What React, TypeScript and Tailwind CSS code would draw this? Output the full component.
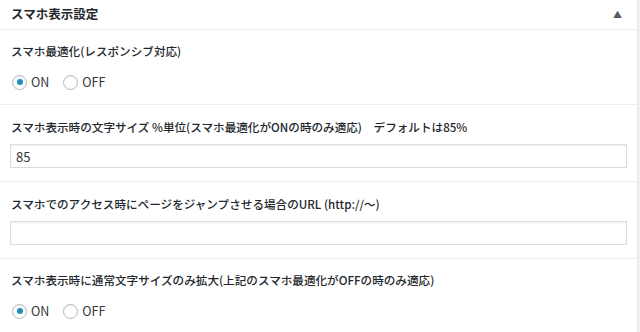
import React from 'react'

const font = { fontFamily: '"Noto Sans CJK JP", "Noto Sans", sans-serif' }

const Radio = ({ checked, label }: { checked?: boolean; label: string }) => (
  <label className="flex items-center gap-[4px] h-[16px]">
    <span className="w-[15px] h-[15px] rounded-full border border-[#b4b9be] bg-white shadow-[inset_0_1px_2px_rgba(0,0,0,0.07)] flex items-center justify-center">
      {checked && <span className="w-[6px] h-[6px] rounded-full bg-[#1e8cbe]" />}
    </span>
    <span className="text-[12.5px] text-[#32373c] leading-[16px]">{label}</span>
  </label>
)

const RadioRow = ({ label }: { label: string }) => (
  <div className="px-[11px] pt-[13px] pb-[14px] border-b border-[#eeeeee]">
    <div className="text-[11.6px] leading-[16px] font-medium text-[#23282d]">{label}</div>
    <div className="flex gap-[14px] mt-[15px] pl-[1px]">
      <Radio checked label="ON" />
      <Radio label="OFF" />
    </div>
  </div>
)

const InputRow = ({ label, value }: { label: string; value?: string }) => (
  <div className="px-[10px] pt-[14px] pb-[13px] border-b border-[#eeeeee]">
    <div className="pl-[1px] text-[11.6px] leading-[16px] font-medium text-[#23282d] whitespace-pre">{label}</div>
    <input
      readOnly
      value={value ?? ''}
      className="mt-[9px] block w-[617px] h-[24px] border border-[#dddddd] bg-white px-[5px] text-[13px] text-[#32373c] shadow-[inset_0_1px_2px_rgba(0,0,0,0.07)] outline-none"
      style={font}
    />
  </div>
)

export default function App() {
  return (
    <div className="min-h-screen bg-[#f1f1f1]" style={font}>
      <div className="w-[638px] bg-white border-r border-[#e5e5e5]">
        <div className="h-[30px] flex items-center justify-between pl-[11px] pr-[15px] border-b border-[#eeeeee]">
          <h2 className="text-[12.5px] font-bold text-[#23282d] leading-none">スマホ表示設定</h2>
          <span className="text-[9px] text-[#555d66] leading-none">▲</span>
        </div>
        <RadioRow label="スマホ最適化(レスポンシブ対応)" />
        <InputRow label="スマホ表示時の文字サイズ %単位(スマホ最適化がONの時のみ適応)　デフォルトは85%" value="85" />
        <InputRow label="スマホでのアクセス時にページをジャンプさせる場合のURL (http://～)" />
        <RadioRow label="スマホ表示時に通常文字サイズのみ拡大(上記のスマホ最適化がOFFの時のみ適応)" />
      </div>
    </div>
  )
}
